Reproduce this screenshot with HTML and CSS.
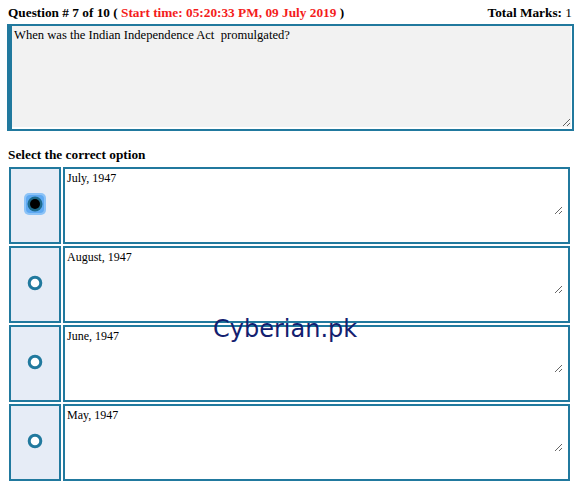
FILE: index.html
```html
<!DOCTYPE html>
<html>
<head>
<meta charset="utf-8">
<link rel="stylesheet" href="styles.css">
</head>
<body>
<div class="page">
  <div class="header">
    <div>Question # 7 of 10 ( <span class="red">Start time: 05:20:33 PM, 09 July 2019</span> )</div>
    <div>Total Marks: <span class="normal">1</span></div>
  </div>
  <div class="qbox">
    <textarea class="qtext">When was the Indian Independence Act  promulgated?</textarea>
  </div>
  <div class="select">Select the correct option</div>
  <table class="options">
    <tr>
      <td class="rcell">
        <svg class="radio" width="24" height="24" viewBox="0 0 24 24">
          <rect x="1" y="1" width="22" height="22" rx="5" fill="#8cc3f7"/>
          <rect x="3" y="3" width="18" height="18" rx="4" fill="#5ea9f2"/>
          <circle cx="12" cy="12" r="7.5" fill="#1d6a8c"/>
          <circle cx="12" cy="12" r="5" fill="#000"/>
        </svg>
      </td>
      <td class="tcell"><textarea class="otext">July, 1947</textarea></td>
    </tr>
    <tr>
      <td class="rcell">
        <svg class="radio" width="24" height="24" viewBox="0 0 24 24">
          <circle cx="12" cy="12" r="5.8" fill="#fff" stroke="#21799e" stroke-width="3"/>
        </svg>
      </td>
      <td class="tcell"><textarea class="otext">August, 1947</textarea></td>
    </tr>
    <tr>
      <td class="rcell">
        <svg class="radio" width="24" height="24" viewBox="0 0 24 24">
          <circle cx="12" cy="12" r="5.8" fill="#fff" stroke="#21799e" stroke-width="3"/>
        </svg>
      </td>
      <td class="tcell"><textarea class="otext">June, 1947</textarea></td>
    </tr>
    <tr>
      <td class="rcell">
        <svg class="radio" width="24" height="24" viewBox="0 0 24 24">
          <circle cx="12" cy="12" r="5.8" fill="#fff" stroke="#21799e" stroke-width="3"/>
        </svg>
      </td>
      <td class="tcell"><textarea class="otext">May, 1947</textarea></td>
    </tr>
  </table>
  <div class="watermark">Cyberian.pk</div>
</div>
</body>
</html>
```

FILE: styles.css
```css
html, body {
  margin: 0;
  padding: 0;
  background: #fff;
}
body {
  font-family: "Liberation Serif", "Times New Roman", serif;
  color: #000;
}
.page {
  position: relative;
  width: 579px;
  height: 486px;
}
.header {
  display: flex;
  justify-content: space-between;
  padding: 4px 7px 0 8px;
  height: 20px;
  font-weight: bold;
  font-size: 13.3px;
  line-height: 17px;
}
.red {
  color: #f41c1c;
}
.normal {
  font-weight: normal;
}
.qbox {
  margin: 0 5px 0 7px;
  border: 2px solid #21799e;
  border-left-width: 5px;
  height: 103px;
  padding-right: 1px;
}
.qtext {
  display: block;
  box-sizing: border-box;
  width: 100%;
  height: 101px;
  margin: 0;
  border: none;
  outline: none;
  background: #f2f2f2;
  font-family: "Liberation Serif", "Times New Roman", serif;
  font-size: 12.6px;
  line-height: 15px;
  padding: 2px 2px;
  color: #000;
}
.select {
  margin: 15px 0 0 8px;
  font-weight: bold;
  font-size: 13.3px;
  line-height: 17px;
  height: 17px;
}
.options {
  margin: 2px 0 0 7px;
  border-collapse: separate;
  border-spacing: 2px 2px;
  width: 565px;
}
.options td {
  height: 73px;
  padding: 0;
  border: 2px solid #21799e;
  vertical-align: top;
}
.rcell {
  width: 48px;
  background: #e6ecf6;
  text-align: center;
  vertical-align: middle !important;
}
.rcell .radio {
  display: block;
  margin: 0 auto 4px;
}
.tcell {
  background: #fff;
}
.otext {
  display: block;
  box-sizing: border-box;
  width: 498px;
  height: 46px;
  margin: 0;
  border: none;
  outline: none;
  background: #fff;
  font-family: "Liberation Serif", "Times New Roman", serif;
  font-size: 12px;
  line-height: 14px;
  padding: 2px 2px;
  color: #000;
}
.watermark {
  position: absolute;
  left: 213px;
  top: 315px;
  font-family: "DejaVu Sans", Verdana, sans-serif;
  font-size: 24px;
  color: #13206f;
  white-space: nowrap;
}
```
